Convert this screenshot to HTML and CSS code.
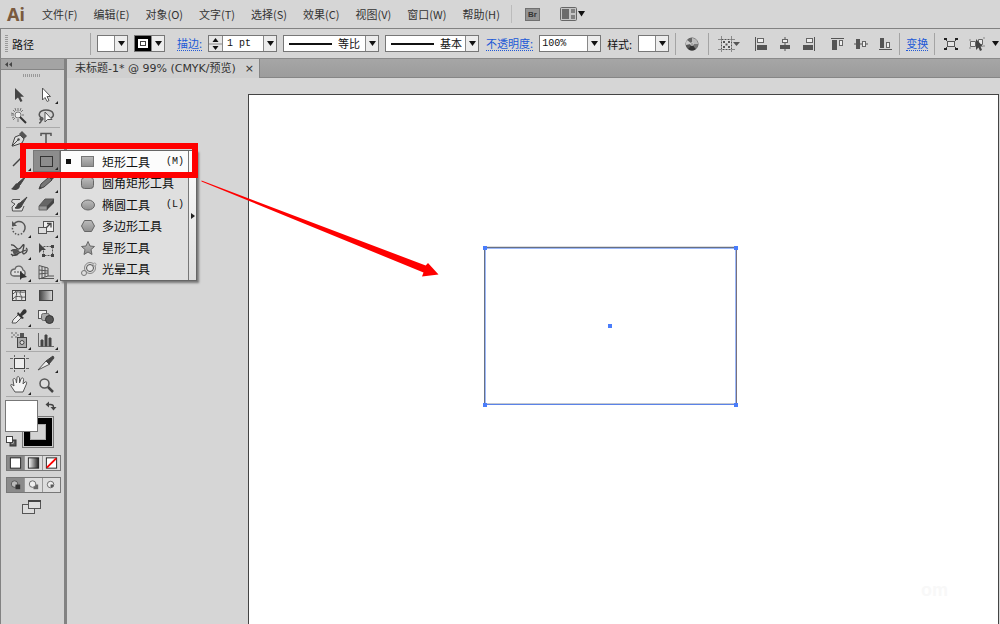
FILE: index.html
```html
<!DOCTYPE html>
<html lang="zh-CN">
<head>
<meta charset="utf-8">
<title>未标题-1</title>
<link rel="stylesheet" href="styles.css">
</head>
<body>
<svg class="defs" width="0" height="0" aria-hidden="true">
  <defs>
    <linearGradient id="metal" x1="0" y1="0" x2="0" y2="1"><stop offset="0" stop-color="#bcbcbc"/><stop offset="1" stop-color="#8e8e8e"/></linearGradient>
    <linearGradient id="ramp"><stop offset="0" stop-color="#fff"/><stop offset="1" stop-color="#222"/></linearGradient>
    <linearGradient id="ramp-dark"><stop offset="0" stop-color="#444"/><stop offset="1" stop-color="#ddd"/></linearGradient>
    <symbol id="down" viewBox="0 0 7 5"><path d="M0 0H7L3.5 5Z" fill="#111"/></symbol>
    <symbol id="more" viewBox="0 0 3 3"><path d="M3 0V3H0Z" fill="#222"/></symbol>
  </defs>
</svg>
<div class="app">
  <nav class="menubar">
    <span class="logo">Ai</span>
    <div class="menus">
      <button>文件(F)</button><button>编辑(E)</button><button>对象(O)</button><button>文字(T)</button><button>选择(S)</button><button>效果(C)</button><button>视图(V)</button><button>窗口(W)</button><button>帮助(H)</button>
    </div>
    <span class="menu-sep"></span>
    <button class="bridge">Br</button>
    <button class="arrange" aria-label="排列文档">
      <svg width="26" height="14" viewBox="0 0 26 14"><rect x=".5" y=".5" width="16" height="13" rx="1" fill="#c4c4c4" stroke="#666"/><rect x="2" y="2" width="7" height="10" fill="#6a6a6a"/><rect x="11" y="2" width="4" height="4" fill="#808080"/><rect x="11" y="8" width="4" height="4" fill="#808080"/><path d="M18 4H25L21.500 9.500Z" fill="#111"/></svg>
    </button>
  </nav>

  <div class="controlbar">
    <span class="grip"></span>
    <span class="context">路径</span>
    <span class="sep"></span>
    <div class="combo mini"><select aria-label="填色"><option></option></select><span class="arrow"><svg width="7" height="5"><use href="#down"/></svg></span></div>
    <div class="combo mini stroke"><select aria-label="描边颜色"><option></option></select><span class="arrow"><svg width="7" height="5"><use href="#down"/></svg></span></div>
    <a class="stroke-link" href="#stroke">描边:</a>
    <div class="combo weight">
      <button class="spin" aria-label="调整粗细"><svg width="13" height="16" viewBox="0 0 13 16"><path d="M3.500 6H9.500L6.500 2ZM3.500 10H9.500L6.500 14Z" fill="#111"/><path d="M0 8H13" stroke="#888"/></svg></button>
      <input aria-label="描边粗细" value="1 pt">
      <span class="arrow"><svg width="7" height="5"><use href="#down"/></svg></span>
    </div>
    <div class="combo profile"><span class="line"></span><select aria-label="宽度配置"><option>等比</option></select><span class="arrow"><svg width="7" height="5"><use href="#down"/></svg></span></div>
    <div class="combo brush"><span class="line"></span><select aria-label="画笔"><option>基本</option></select><span class="arrow"><svg width="7" height="5"><use href="#down"/></svg></span></div>
    <a class="opacity-link" href="#opacity">不透明度:</a>
    <div class="combo opacity"><input aria-label="不透明度" value="100%"><span class="arrow"><svg width="7" height="5"><use href="#down"/></svg></span></div>
    <label for="style">样式:</label>
    <div class="combo mini"><select id="style"><option></option></select><span class="arrow"><svg width="7" height="5"><use href="#down"/></svg></span></div>
    <span class="sep"></span>
    <button class="icon" aria-label="重新着色图稿"><svg width="14" height="14" viewBox="0 0 14 14"><circle cx="7" cy="7" r="6" fill="#888" stroke="#555"/><path d="M7 7V1A6 6 0 0 1 13 7Z" fill="#bbb"/><path d="M7 7L2 3A6 6 0 0 1 7 1Z" fill="#666"/><path d="M7 7L1 8A6 6 0 0 1 2 3Z" fill="#ccc"/><path d="M1 8L7 7L3 12A6 6 0 0 1 1 8Z" fill="#555"/><path d="M7 7L3 12A6 6 0 0 0 11 12Z" fill="#333"/><path d="M7 7L11 12A6 6 0 0 0 13 7Z" fill="#777"/><circle cx="7" cy="7" r="1.500" fill="#999" stroke="#ddd" stroke-width=".6"/></svg></button>
    <span class="sep"></span>
    <button class="icon align-to" aria-label="对齐"><svg width="24" height="16" viewBox="0 0 24 16"><rect x="4.500" y="3.500" width="10" height="10" fill="#ddd" stroke="#555" stroke-dasharray="2 1"/><path d="M4.500 0V3M14.500 0V3M4.500 14V16M14.500 14V16M1 3.500H4M15 3.500H18M1 13.500H4M15 13.500H18" stroke="#888"/><path d="M6 5H8V7H6ZM11 5H13V7H11ZM6 10H8V12H6ZM11 10H13V12H11ZM8.500 7.500H10.500V9.500H8.500Z" fill="#555"/><path d="M16 6H23L19.500 10Z" fill="#555"/></svg></button>
    <div class="aligns">
      <button class="icon" aria-label="水平左对齐"><svg width="14" height="14" viewBox="0 0 14 14"><path d="M1.500 0V14" stroke="#555"/><rect x="3.500" y="1.500" width="6" height="4" fill="#eee" stroke="#666"/><rect x="3" y="8" width="10" height="5" fill="#555"/></svg></button>
      <button class="icon" aria-label="水平居中对齐"><svg width="14" height="14" viewBox="0 0 14 14"><path d="M7 0V14" stroke="#555"/><rect x="4.500" y="2.500" width="5" height="3" fill="#eee" stroke="#666"/><rect x="2" y="8" width="10" height="4" fill="#555"/></svg></button>
      <button class="icon" aria-label="水平右对齐"><svg width="14" height="14" viewBox="0 0 14 14"><path d="M12.500 0V14" stroke="#555"/><rect x="4.500" y="1.500" width="6" height="4" fill="#eee" stroke="#666"/><rect x="1" y="8" width="10" height="5" fill="#555"/></svg></button>
    </div>
    <div class="aligns">
      <button class="icon" aria-label="垂直顶对齐"><svg width="14" height="14" viewBox="0 0 14 14"><path d="M1 1.500H14" stroke="#555"/><rect x="2" y="3" width="5" height="10" fill="#555"/><rect x="9.500" y="3.500" width="3" height="5" fill="#eee" stroke="#666"/></svg></button>
      <button class="icon" aria-label="垂直居中对齐"><svg width="14" height="14" viewBox="0 0 14 14"><path d="M0 7H14" stroke="#555"/><rect x="2" y="2" width="4" height="10" fill="#555"/><rect x="8.500" y="4.500" width="3" height="5" fill="#eee" stroke="#666"/></svg></button>
      <button class="icon" aria-label="垂直底对齐"><svg width="14" height="14" viewBox="0 0 14 14"><path d="M1 12.500H14" stroke="#555"/><rect x="2" y="1" width="4" height="10" fill="#555"/><rect x="8.500" y="5.500" width="3" height="5" fill="#eee" stroke="#666"/></svg></button>
    </div>
    <span class="sep"></span>
    <a class="transform-link" href="#transform">变换</a>
    <span class="sep"></span>
    <button class="icon" aria-label="隔离"><svg width="14" height="14" viewBox="0 0 14 14"><rect x="3.500" y="4.500" width="7" height="5" fill="#e4e4e4" stroke="#555"/><path d="M1 2L3 4M13 2L11 4M1 12L3 10M13 12L11 10" stroke="#444"/><path d="M0 1H3V3H0ZM11 1H14V3H11ZM0 11H3V13H0ZM11 11H14V13H11Z" fill="#222"/></svg></button>
    <button class="icon" aria-label="选择类似对象"><svg width="16" height="14" viewBox="0 0 16 14"><path d="M1.500 4.500H6.500V9.500H1.500ZM9.500 2.500H13.500V7.500H9.500Z" fill="#e8e8e8" stroke="#666"/><path d="M0 3H2M0 11H2M14 1H16M14 9H16" stroke="#888"/><path d="M7 2V13L9.500 10.500L11 14L13 13L11.500 9.500H14Z" fill="#444"/></svg></button>
    <svg class="edge-arrow" width="7" height="5"><use href="#down"/></svg>
  </div>

  <div class="workspace">
    <aside class="toolpanel">
      <div class="panel-head"><svg width="7" height="5" viewBox="0 0 7 5"><path d="M3 0V5L0 2.500ZM7 0V5L4 2.500Z" fill="#444"/></svg></div>
      <div class="panel-grip"></div>
      <div class="tools">
        <button aria-label="选择"><svg viewBox="0 0 27 22"><path d="M9 5V17L12 14.500L14.500 19L16.500 18L14.300 13.700H18Z" fill="#444"/></svg></button>
        <button aria-label="直接选择"><svg viewBox="0 0 27 22"><path d="M9.500 5V17L12 14.500L14.200 18.500L16 17.500L14 13.500H17.500Z" fill="#fff" stroke="#555"/><use href="#more" x="22" y="18" width="3" height="3"/></svg></button>
        <button aria-label="魔棒"><svg viewBox="0 0 27 22"><circle cx="12" cy="10" r="3" fill="#eee" stroke="#777"/><path d="M12 3V6M12 14V17M5 10H8M16 10H18M7 5L9 7M17 5L15 7M7 15L9 13M9 3L10 6M15 3L14 6M5 8L8 9M6 13L8 12" stroke="#777"/><path d="M14 12L20 18" stroke="#333" stroke-width="2"/></svg></button>
        <button aria-label="套索"><svg viewBox="0 0 27 22"><path d="M9 13C4 11 6 5 13 5C21 5 22 11 18 13M9 13C6 13 7 16 9 15C11 14 9 12 8 13C9 15 8 18 6 18" fill="none" stroke="#555" stroke-width="1.500"/><path d="M12 7V17L14.500 14.500L19 14.500Z" fill="#fff" stroke="#555"/></svg></button>
      </div>
      <div class="tools">
        <button aria-label="钢笔"><svg viewBox="0 0 27 22"><path d="M6 18L9 9L14 7L18 11L16 15L7 18Z" fill="#ddd" stroke="#444"/><path d="M6 18L12 12" stroke="#444"/><circle cx="12.500" cy="11.500" r="1.200" fill="#444"/><path d="M13 6L16 3L21 8L18 11Z" fill="#555"/></svg></button>
        <button aria-label="文字"><svg viewBox="0 0 27 22"><path d="M8 8V5.500H18V8M13 5.500V17M10.500 17H15.500" fill="none" stroke="#555" stroke-width="1.500"/></svg></button>
        <button aria-label="直线段"><svg viewBox="0 0 27 22"><path d="M7 16L17 6" stroke="#444" stroke-width="1.500"/><use href="#more" x="22" y="18" width="3" height="3"/></svg></button>
        <button class="active" aria-label="矩形"><svg viewBox="0 0 25 20"><rect x="6.500" y="5.500" width="12" height="10" fill="#8c8c8c" stroke="#333"/><use href="#more" x="21" y="16" width="3" height="3"/></svg></button>
        <button aria-label="画笔"><svg viewBox="0 0 27 22"><path d="M20 4L12 11L14 13Z" fill="#444" stroke="#444"/><path d="M12 11C9 11 9 14 5 17C9 19 14 18 14 13Z" fill="#444"/></svg></button>
        <button aria-label="铅笔"><svg viewBox="0 0 27 22"><path d="M6 17L8 12L16 5L19 8L11 15Z" fill="#777" stroke="#444"/><path d="M15 4L17 2L21 6L19 8ZM6 17L7 14L9 16Z" fill="#444"/><use href="#more" x="22" y="18" width="3" height="3"/></svg></button>
        <button aria-label="斑点画笔"><svg viewBox="0 0 27 22"><path d="M14 5.500H6.500L5.500 8L9 10L6 13L6.500 17H16L18 12" fill="#ddd" stroke="#555"/><path d="M21 3L14 9L16 11ZM14 9C11 9 12 12 9 14C12 15 16 14 16 11Z" fill="#444" stroke="#444"/></svg></button>
        <button aria-label="橡皮擦"><svg viewBox="0 0 27 22"><path d="M6 12L12 5H21L15 12Z" fill="#666" stroke="#555"/><path d="M6 12H14V16H6Z" fill="#999" stroke="#666"/><path d="M14 12L21 5V9L14 16Z" fill="#444"/><use href="#more" x="22" y="18" width="3" height="3"/></svg></button>
      </div>
      <div class="tools">
        <button aria-label="旋转"><svg viewBox="0 0 27 22"><path d="M8 7A6 6 0 0 1 18 14" fill="none" stroke="#555" stroke-width="1.500"/><path d="M18 14A6 6 0 0 1 7 9" fill="none" stroke="#555" stroke-width="1.500" stroke-dasharray="1.500 1.500"/><path d="M6 4V9H11Z" fill="#555"/><use href="#more" x="22" y="18" width="3" height="3"/></svg></button>
        <button aria-label="比例缩放"><svg viewBox="0 0 27 22"><rect x="10.500" y="4.500" width="10" height="10" fill="#eee" stroke="#555"/><rect x="5.500" y="10.500" width="8" height="6" fill="#ddd" stroke="#555"/><path d="M13 11L17 7M14 6.500H18V10.500" fill="none" stroke="#444" stroke-width="1.300"/><use href="#more" x="22" y="18" width="3" height="3"/></svg></button>
        <button aria-label="宽度"><svg viewBox="0 0 27 22"><path d="M5 6C9 5 9 9 12 10C15 11 17 4 18 6C18 9 15 15 18 15C21 14 22 10 20 9M5 12C9 9 14 12 13 14C11 17 7 17 5 15M6 17L20 11" fill="none" stroke="#444" stroke-width="1.300"/><path d="M6 11L11 10L13 13L8 16Z" fill="#555"/><use href="#more" x="22" y="18" width="3" height="3"/></svg></button>
        <button aria-label="自由变换"><svg viewBox="0 0 27 22"><rect x="10.500" y="7.500" width="9" height="9" fill="none" stroke="#555" stroke-dasharray="2 1"/><path d="M6 4V14L9 11H13ZM18 6H21V9H18ZM18 15H21V18H18ZM9 15H12V18H9Z" fill="#444"/></svg></button>
        <button aria-label="形状生成器"><svg viewBox="0 0 27 22"><path d="M8 15C3 15 4 8 9 8C10 4 16 4 17 9C20 10 20 15 16 15Z" fill="#ddd" stroke="#666" stroke-width="1.300"/><path d="M8 11H16" stroke="#555" stroke-dasharray="2 1"/><path d="M14 10V19L16 17L21 16Z" fill="#333"/><use href="#more" x="22" y="18" width="3" height="3"/></svg></button>
        <button aria-label="透视网格"><svg viewBox="0 0 27 22"><path d="M6 4.500L15 7V15L6 18ZM9 5V17M12 6V16M6 9L15 10M6 13L15 12M15 15H21M6 17.500H21" fill="none" stroke="#555"/><use href="#more" x="22" y="18" width="3" height="3"/></svg></button>
      </div>
      <div class="tools">
        <button aria-label="网格"><svg viewBox="0 0 27 22"><rect x="6.500" y="6.500" width="13" height="10" fill="#e4e4e4" stroke="#444"/><path d="M7 10C10 6 14 9 19 8M7 15C10 10 15 14 19 13M9 7C13 9 8 13 11 17M15 7C12 11 18 12 15 17" fill="none" stroke="#555"/></svg></button>
        <button aria-label="渐变"><svg viewBox="0 0 27 22"><rect x="6.500" y="6.500" width="13" height="10" fill="url(#ramp-dark)" stroke="#444"/></svg></button>
        <button aria-label="吸管"><svg viewBox="0 0 27 22"><path d="M6 17L7 14L13 8L16 11L10 17Z" fill="#eee" stroke="#555"/><path d="M12 6L18 12L16 13L11 8ZM14 8L17 4C19 2 22 5 20 7L16 10Z" fill="#333"/><use href="#more" x="22" y="18" width="3" height="3"/></svg></button>
        <button aria-label="混合"><svg viewBox="0 0 27 22"><rect x="5.500" y="4.500" width="8" height="8" fill="#eee" stroke="#555"/><rect x="8.500" y="7.500" width="8" height="7" rx="2" fill="#aaa" stroke="#666"/><circle cx="16.500" cy="13.500" r="4" fill="#555" stroke="#333"/></svg></button>
      </div>
      <div class="tools">
        <button aria-label="符号喷枪"><svg viewBox="0 0 27 22"><rect x="11.500" y="8.500" width="9" height="10" fill="#aaa" stroke="#444"/><rect x="14" y="4" width="4" height="4" fill="#555"/><circle cx="16" cy="13.500" r="2" fill="#ddd" stroke="#444"/><path d="M5 4H7M9 4H11M7 6H9M11 6H13M5 8H7M9 8H11" stroke="#666"/><use href="#more" x="22" y="18" width="3" height="3"/></svg></button>
        <button aria-label="柱形图"><svg viewBox="0 0 27 22"><path d="M5.500 4V17.500H21" fill="none" stroke="#666"/><path d="M8 11H10V17H8ZM12 6H14V17H12ZM16 9H18V17H16Z" fill="#444" stroke="#444"/><use href="#more" x="22" y="18" width="3" height="3"/></svg></button>
      </div>
      <div class="tools">
        <button aria-label="画板"><svg viewBox="0 0 27 22"><rect x="8.500" y="6.500" width="10" height="10" fill="#eee" stroke="#444"/><path d="M8.500 3V5M18.500 3V5M8.500 18V20M18.500 18V20M4 6.500H7M20 6.500H23M4 16.500H7M20 16.500H23" stroke="#666"/></svg></button>
        <button aria-label="切片"><svg viewBox="0 0 27 22"><path d="M5 18L13 9L17 12Z" fill="#eee" stroke="#555"/><path d="M13 9L20 4L21 6L16 12Z" fill="#444" stroke="#444"/><use href="#more" x="22" y="18" width="3" height="3"/></svg></button>
        <button aria-label="抓手"><svg viewBox="0 0 27 22"><path d="M9 18L5 12C4 10 6 10 8 12L7 6C7 4 9 4 10 6L10.500 9L11 4C11 2 13 2 13.500 4V9L15 5C16 3 18 4 17.500 6L17 10L19 8C21 7 21 9 20 11L17 18Z" fill="#f4f4f4" stroke="#555"/><use href="#more" x="22" y="18" width="3" height="3"/></svg></button>
        <button aria-label="缩放"><svg viewBox="0 0 27 22"><circle cx="11.500" cy="9.500" r="4.500" fill="#ddd" stroke="#555" stroke-width="1.500"/><path d="M15 13L20 18" stroke="#444" stroke-width="2.500"/></svg></button>
      </div>
      <button class="paint" aria-label="填色和描边">
        <svg width="54" height="52" viewBox="0 0 54 52"><rect x="17.500" y="18.500" width="31" height="31" fill="#000" stroke="#777"/><rect x="18.500" y="19.500" width="29" height="29" fill="none" stroke="#ccc"/><rect x="25.500" y="26.500" width="15" height="15" fill="#d3d3d3" stroke="#aaa"/><rect x=".5" y="2.500" width="32" height="31" fill="#fff" stroke="#777"/><path d="M43 6.500H45.500C47.500 6.500 48.500 7.500 48.500 9" fill="none" stroke="#444" stroke-width="1.300"/><path d="M44 3.500V9.500L40.500 6.500ZM45.500 9H51.500L48.500 12.500Z" fill="#444"/><rect x="5" y="42" width="6" height="6" fill="#555" stroke="#333"/><rect x="6.500" y="43.500" width="2" height="2" fill="#eee"/><rect x="1.500" y="38.500" width="6" height="6" fill="#fff" stroke="#444"/></svg>
      </button>
      <div class="modes">
        <button class="active" aria-label="颜色"><svg viewBox="0 0 18 15"><rect x="3.500" y="2" width="11" height="11" fill="#fff" stroke="#222"/></svg></button>
        <button aria-label="渐变填色"><svg viewBox="0 0 18 15"><rect x="3.500" y="2" width="11" height="11" fill="url(#ramp)" stroke="#222"/></svg></button>
        <button aria-label="无"><svg viewBox="0 0 18 15"><rect x="3.500" y="2" width="11" height="11" fill="#fff" stroke="#222"/><path d="M4 12.500L14 2.500" stroke="#f00" stroke-width="2"/></svg></button>
      </div>
      <div class="modes">
        <button class="active" aria-label="正常绘图"><svg viewBox="0 0 18 15"><circle cx="8" cy="6.500" r="3.500" fill="#bbb" stroke="#555"/><rect x="9" y="7" width="5" height="5" fill="#333"/></svg></button>
        <button aria-label="背面绘图"><svg viewBox="0 0 18 15"><rect x="9" y="7" width="5" height="5" fill="#666"/><circle cx="8" cy="6.500" r="3.500" fill="#eee" stroke="#666"/></svg></button>
        <button aria-label="内部绘图"><svg viewBox="0 0 18 15"><circle cx="8" cy="7" r="3.500" fill="#eee" stroke="#666"/><path d="M8 7H11V9L9 10H8Z" fill="#555"/></svg></button>
      </div>
      <button class="screen" aria-label="更改屏幕模式"><svg width="20" height="16" viewBox="0 0 20 16"><rect x=".5" y="5.500" width="12" height="9" fill="#ddd" stroke="#555"/><rect x="6.500" y="1.500" width="12" height="8" fill="#ddd" stroke="#555"/><path d="M6 2H19" stroke="#444" stroke-width="2"/></svg></button>
    </aside>

    <main class="document">
      <div class="tabs"><div class="tab"><span>未标题-1* @ 99% (CMYK/预览)</span><button aria-label="关闭">×</button></div></div>
      <div class="pasteboard">
        <div class="artboard">
          <svg class="drawing" width="256" height="162" viewBox="0 0 256 162"><path d="M2 1.500H254" stroke="#ddd"/><path d="M3.500 158V3.500H253" fill="none" stroke="#9db8f8"/><path d="M2.500 159V2.500H254.500" fill="none" stroke="#667085"/><path d="M253.500 3V159" stroke="#9db8f8"/><path d="M254.500 3V159" stroke="#77717f"/><path d="M3 158.500H254" stroke="#c4c8d0"/><path d="M2 159.500H255" stroke="#5b83e8"/><path d="M1 1H5V5H1ZM252 1H256V5H252ZM1 158H5V162H1ZM252 158H256V162H252ZM126 79H130V83H126Z" fill="#4a7dfb"/></svg>
          <span class="watermark">om</span>
        </div>
      </div>
    </main>
  </div>

  <div class="flyout">
    <div class="shapes">
      <button class="current"><span class="mark"></span><svg width="14" height="14" viewBox="0 0 14 14"><rect x=".5" y="1.500" width="12" height="10" fill="url(#metal)" stroke="#777"/></svg><span>矩形工具</span><kbd>(M)</kbd></button>
      <button><span></span><svg width="14" height="14" viewBox="0 0 14 14"><rect x=".5" y="1.500" width="12" height="11" rx="3" fill="url(#metal)" stroke="#666"/></svg><span>圆角矩形工具</span></button>
      <button><span></span><svg width="14" height="14" viewBox="0 0 14 14"><ellipse cx="7" cy="7" rx="6.500" ry="5" fill="url(#metal)" stroke="#666"/></svg><span>椭圆工具</span><kbd>(L)</kbd></button>
      <button><span></span><svg width="14" height="14" viewBox="0 0 14 14"><path d="M.5 7L3.500 1.500H10.500L13.500 7L10.500 12.500H3.500Z" fill="url(#metal)" stroke="#666"/></svg><span>多边形工具</span></button>
      <button><span></span><svg width="14" height="14" viewBox="0 0 14 14"><path d="M7 .5L9 5L13.500 5.500L10 8.500L11 13.500L7 11L3 13.500L4 8.500L.5 5.500L5 5Z" fill="url(#metal)" stroke="#666"/></svg><span>星形工具</span></button>
      <button><span></span><svg width="16" height="14" viewBox="0 0 16 14"><circle cx="9" cy="6" r="5.500" fill="#ddd" stroke="#888"/><circle cx="3" cy="11" r="2.500" fill="#ddd" stroke="#777"/><circle cx="13.500" cy="2.500" r="1.500" fill="#ddd" stroke="#999"/><circle cx="9" cy="6" r="3.500" fill="#e6e6e6" stroke="#555"/></svg><span>光晕工具</span></button>
    </div>
    <button class="tearoff" aria-label="拖出"><svg width="4" height="6" viewBox="0 0 4 6"><path d="M0 0V6L4 3Z" fill="#222"/></svg></button>
  </div>
  <div class="highlight"></div>
  <svg class="pointer" width="240" height="100" viewBox="0 0 240 100"><path d="M1.500 .5L225.700 85.500L228 83L238.500 94.500L222 96.500L223.500 92.500L1.500 1.500Z" fill="#f00"/></svg>
</div>
</body>
</html>
```
FILE: styles.css
```css
* { box-sizing: border-box; }
body { margin: 0; background: #d6d6d6; color: #333; font: 11px/16px "Noto Sans CJK SC", sans-serif; }
button, input, select { margin: 0; padding: 0; border: 0; background: none; color: inherit; font: inherit; border-radius: 0; outline: 0; }
svg { display: block; flex: none; }
a { color: #2159d6; text-decoration: none; border-bottom: 1px dotted #2159d6; line-height: 14px; white-space: nowrap; flex: none; }
.defs { position: absolute; }
.app { position: relative; display: flex; flex-direction: column; height: 100vh; overflow: hidden; }

.menubar { display: flex; align-items: center; flex: none; height: 28px; padding-left: 7px; }
.logo { width: 35px; color: #7a5a3e; font: bold 18px/24px "Noto Sans", sans-serif; }
.menus { display: flex; gap: 16px; }
.menus button { white-space: nowrap; }
.menu-sep { width: 1px; height: 18px; margin: 0 13px 0 11px; background: #bbb; }
.bridge { width: 15px; height: 13px; margin-right: 20px; border: 1px solid #707070; background: #939393; color: #333; font: bold 8px/11px "Liberation Sans", sans-serif; }

.controlbar { display: flex; align-items: center; flex: none; gap: 6px; height: 31px; padding-left: 4px; border-top: 1px solid #828282; border-bottom: 1px solid #8a8a8a; border-left: 1px solid #828282; overflow: hidden; background: #d6d6d6; color: #111; }
.grip { flex: none; width: 3px; height: 17px; margin-right: -2px; background: repeating-linear-gradient(#999 0 1px, #d6d6d6 1px 2px); }
.context { flex: none; width: 72px; }
.controlbar label { flex: none; }
.sep { flex: none; width: 1px; height: 22px; background: #a4a4a4; }
.combo { display: flex; flex: none; height: 17px; border: 1px solid #777; background: #fff; }
.combo select, .combo input { flex: 1; min-width: 0; width: 0; height: 15px; line-height: 15px; appearance: none; }
.arrow { display: flex; flex: none; align-items: center; justify-content: center; width: 13px; border-left: 1px solid #888; background: #ececec; pointer-events: none; }
.mini { width: 31px; }
.stroke select { border: 3px solid #000; outline: 1px solid #444; outline-offset: -6px; }
.stroke-link { margin-left: 6px; }
.weight { width: 69px; }
.weight input, .opacity input { padding-left: 4px; font: 10px/15px "Liberation Mono", monospace; }
.opacity input { padding-left: 2px; }
.spin { flex: none; width: 14px; border-right: 1px solid #888; background: #e6e6e6; overflow: hidden; }
.profile { width: 96px; }
.brush { width: 94px; }
.line { flex: none; align-self: center; width: 43px; height: 2px; margin: 0 6px 0 5px; background: #111; }
.opacity-link { margin-left: 1px; }
.opacity { width: 62px; }
.icon { display: flex; flex: none; align-items: center; justify-content: center; width: 20px; height: 20px; }
.align-to { width: 28px; }
.aligns { display: flex; flex: none; }
.aligns .icon { width: 24px; }
.aligns + .aligns { margin-left: -2px; }
.aligns + .sep { margin-left: -4px; }
.edge-arrow { margin-left: -1px; }

.workspace { display: flex; flex: 1; min-height: 0; }
.toolpanel { flex: none; width: 67px; border-left: 1px solid #828282; border-right: 3px solid #828282; background: #d3d3d3; overflow: hidden; }
.panel-head { height: 11px; padding: 3px 4px; border-bottom: 1px solid #868686; background: #a4a4a4; }
.panel-grip { width: 18px; height: 3px; margin: 4px auto 6px 22px; background: repeating-linear-gradient(90deg, #999 0 1px, #d3d3d3 1px 2px); }
.tools { display: grid; grid-template-columns: 27px 27px; margin: 0 4px 0 5px; border-bottom: 1px solid #aaa; }
.tools button { height: 22px; }
.tools svg { width: 27px; height: 22px; }
.tools .active { background: #8c8c8c; border: 1px solid #777; }
.tools .active svg { width: 25px; height: 20px; }
.paint { display: block; margin: 1px 0 5px 4px; }
.modes { display: flex; width: 55px; margin: 0 0 6px 5px; border: 1px solid #777; }
.modes button { flex: 1; border-right: 1px solid #999; background: #ddd; }
.modes button:last-child { border: 0; }
.modes .active { background: #8a8a8a; }
.modes svg { width: 100%; height: 14px; }
.screen { display: block; margin: 6px 0 0 21px; }

.document { display: flex; flex: 1; flex-direction: column; min-width: 0; }
.tabs { display: flex; flex: none; height: 19px; border-bottom: 1px solid #868686; background: linear-gradient(#a6a6a6, #9c9c9c); }
.tab { display: flex; align-items: center; gap: 9px; height: 19px; padding: 0 5px 0 8px; border-right: 1px solid #858585; background: #d0d0d0; white-space: nowrap; font: 11px/18px "DejaVu Sans", "Noto Sans CJK SC", sans-serif; }
.tab button { color: #333; line-height: 16px; }
.pasteboard { display: flex; flex: 1; min-height: 0; padding: 16px 1px 0 181px; background: #d6d6d6; }
.artboard { position: relative; flex: 1; border: 1px solid #444; border-bottom: 0; background: #fff; overflow: hidden; }
.drawing { position: absolute; left: 233px; top: 150px; }
.watermark { position: absolute; right: 50px; bottom: 22px; color: #f8f8f8; font: bold 18px/24px "Liberation Sans", sans-serif; }

.flyout { position: absolute; left: 60px; top: 150px; display: flex; width: 137px; height: 131px; border: 1px solid #666; background: #dfdfdf; box-shadow: 2px 2px 2px #777; color: #111; }
.shapes { display: grid; flex: 1; grid-auto-rows: 1fr; }
.shapes button { display: grid; grid-template-columns: 20px 21px 64px auto; align-items: center; text-align: left; font-size: 12px; white-space: nowrap; }
.shapes kbd { font: 10px/16px "Liberation Mono", monospace; }
.shapes .current { background: #fcfcfc; }
.mark { width: 5px; height: 5px; margin-left: 5px; background: #111; }
.tearoff { display: flex; align-items: center; justify-content: center; width: 8px; border-left: 1px solid #777; background: linear-gradient(#fff, #ddd); }
.highlight { position: absolute; left: 20px; top: 143px; width: 178px; height: 35px; border: 6px solid #f00; pointer-events: none; }
.pointer { position: absolute; left: 200px; top: 180px; pointer-events: none; }
```
